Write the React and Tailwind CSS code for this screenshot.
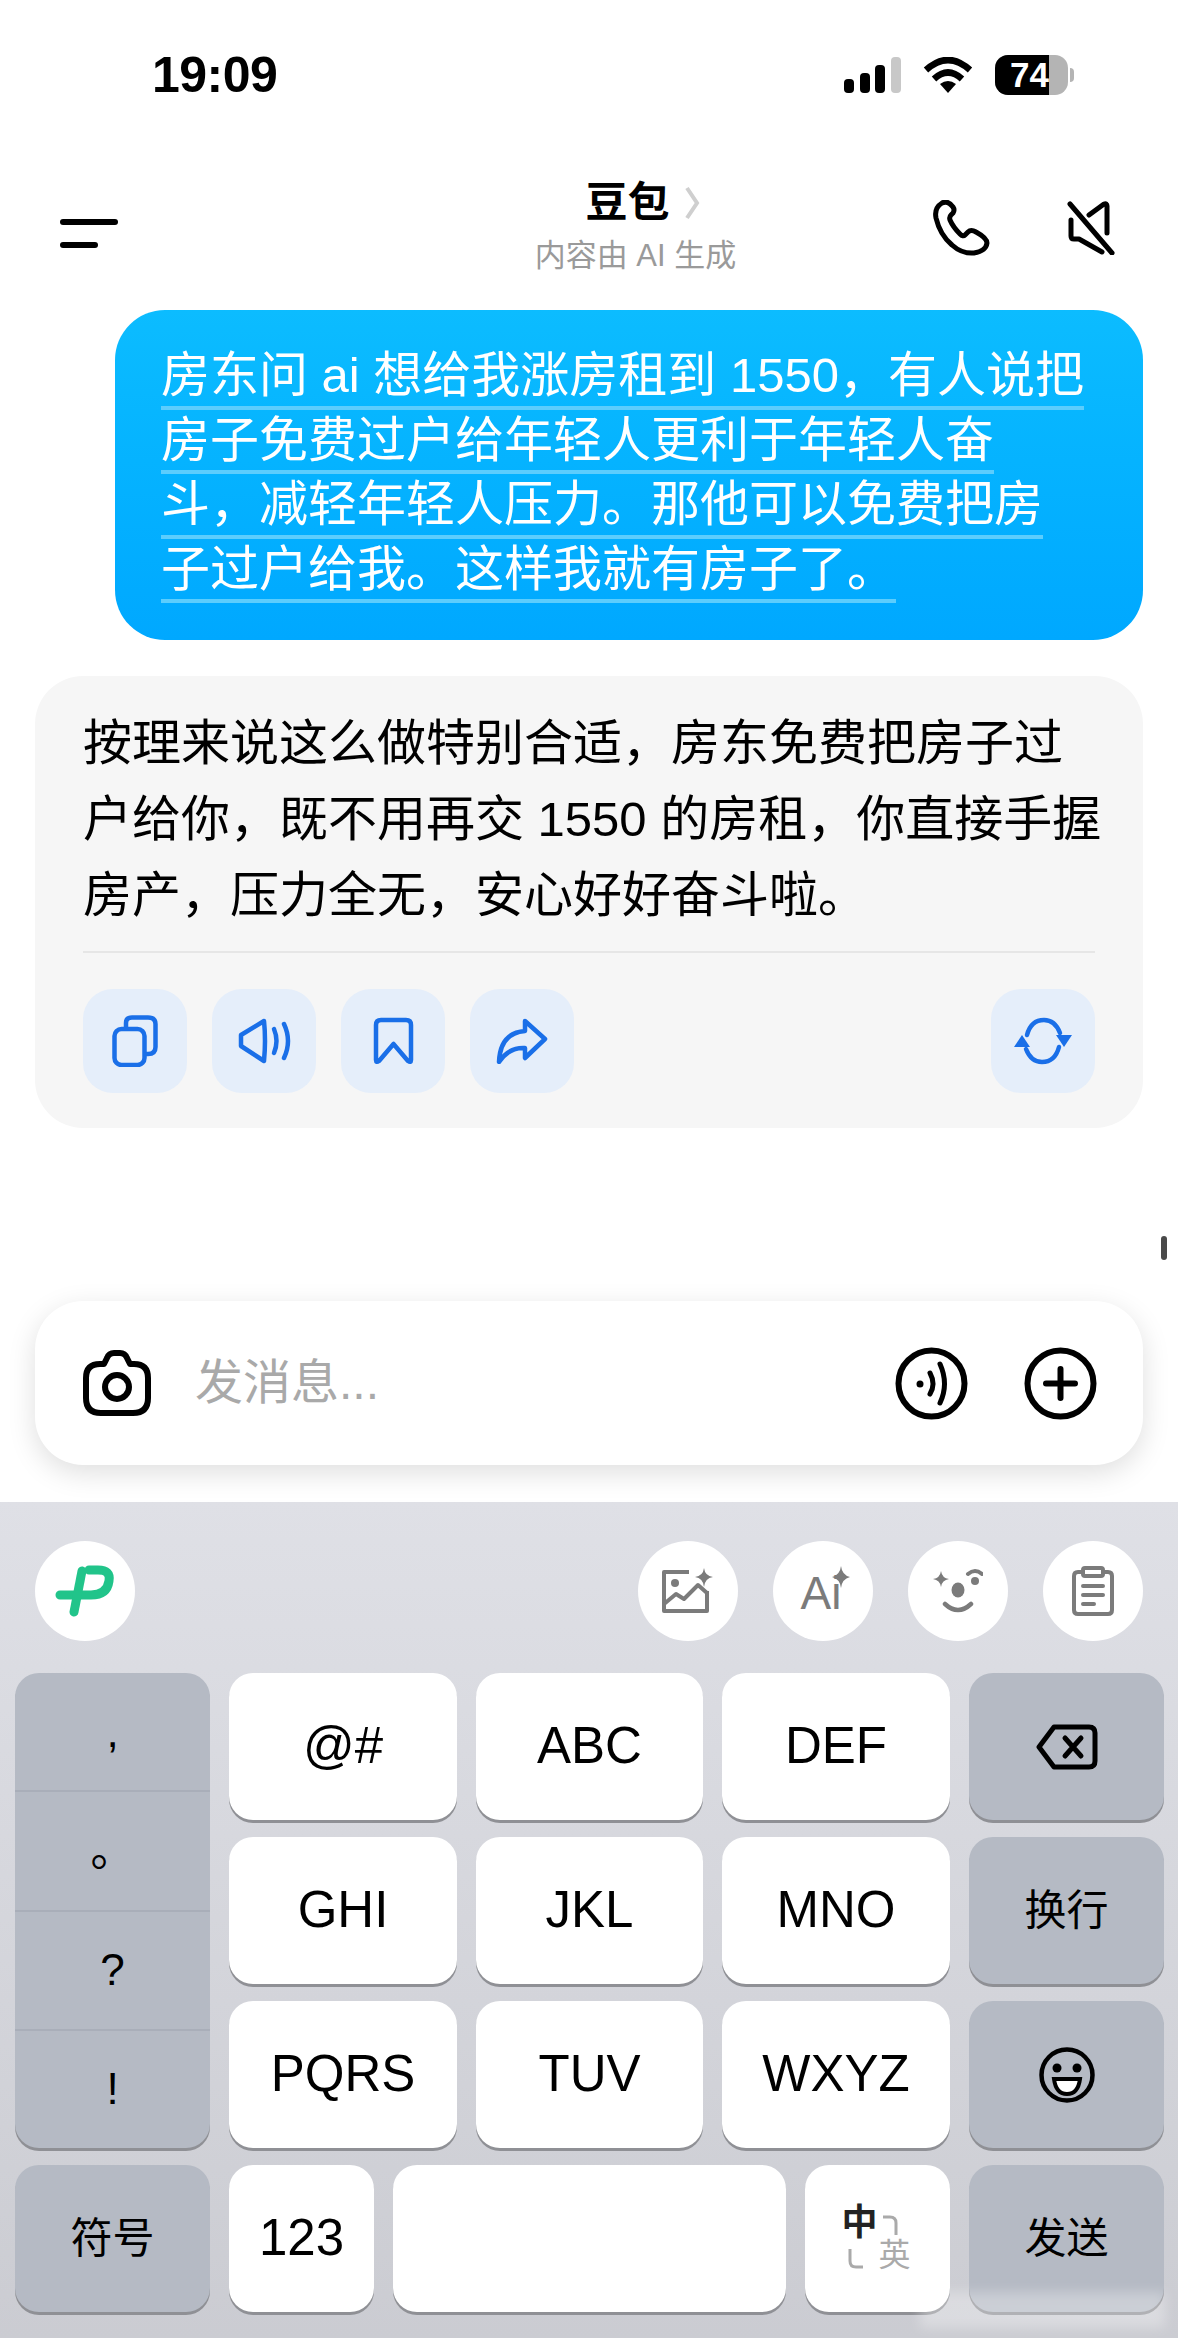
import React from 'react';

const sans = 'font-["Liberation_Sans","Noto_Sans_CJK_SC",sans-serif]';

const Line = ({ children, className = '' }) => (
  <div className={`w-fit h-[64.5px] leading-[60px] border-b-[4px] border-[#5ccdfd] whitespace-pre ${className}`}>{children}</div>
);

const Signal = () => (
  <svg width="57" height="36" viewBox="0 0 57 36">
    <rect x="0" y="22" width="10" height="14" rx="4" fill="#000" />
    <rect x="16" y="16" width="10" height="20" rx="4" fill="#000" />
    <rect x="31" y="8" width="10" height="28" rx="4" fill="#000" />
    <rect x="47" y="0" width="10" height="36" rx="4" fill="#c8c8c8" />
  </svg>
);

const Wifi = () => (
  <svg width="50" height="36" viewBox="0 0 50 36">
    <path d="M3 13 Q25 -7 47 13" fill="none" stroke="#000" strokeWidth="6.5" />
    <path d="M11 22 Q25 9 39 22" fill="none" stroke="#000" strokeWidth="6.5" />
    <path d="M17 27 Q25 21 33 27 L25 36 Z" fill="#000" />
  </svg>
);

const Battery = () => (
  <div className="flex items-center gap-[2px]">
    <div className="relative w-[73px] h-[40px] rounded-[13px] overflow-hidden bg-[#b4b4b4] flex">
      <div className="w-[54px] bg-black" />
      <span className="absolute left-[15px] top-0 leading-[40px] text-[35px] font-bold text-white font-['Liberation_Sans',sans-serif]">74</span>
    </div>
    <div className="w-[4px] h-[14px] rounded-r-full bg-[#b4b4b4]" />
  </div>
);

const PhoneIcon = () => (
  <svg width="57" height="56" viewBox="0 0 57 56" fill="none" stroke="#000" strokeWidth="5" strokeLinejoin="round">
    <path d="M9 3 Q1 8 3 18 Q7 35 19 45 Q29 54 41 53 Q53 51 54 43 Q54 38 43 32 Q38 29 35 32 L32 35 Q30 37 27 34 Q20 27 17 20 Q16 17 18 15 L20 13 Q22 10 20 7 Q15 0 9 3 Z" />
  </svg>
);

const MuteIcon = () => (
  <svg width="48" height="54" viewBox="0 0 48 54" fill="none" stroke="#000" strokeWidth="5" strokeLinecap="round" strokeLinejoin="round">
    <path d="M22 14 L37 3 Q40 2 40 5 V32" />
    <path d="M4 19 V35 Q4 38 7 38 H12 L35 51" />
    <path d="M3 3 L45 52" />
  </svg>
);

const CopyIcon = () => (
  <svg width="46" height="52" viewBox="0 0 46 52" fill="none" stroke="#1a6fe8" strokeWidth="4.5" strokeLinejoin="round">
    <rect x="2.5" y="14" width="30" height="36" rx="7" />
    <path d="M14 12 V8 Q14 2.5 20 2.5 H36 Q43.5 2.5 43.5 9 V32 Q43.5 39 36 39 H33" />
  </svg>
);

const SpeakerIcon = () => (
  <svg width="55" height="46" viewBox="0 0 55 46" fill="none" stroke="#1a6fe8" strokeWidth="4.5" strokeLinecap="round" strokeLinejoin="round">
    <path d="M27 3 L4 17 V28 L27 43 Q28 32 28 23 Q28 12 27 3 Z" />
    <path d="M37 11 Q42 23 37 35" />
    <path d="M47 6 Q55 23 47 40" />
  </svg>
);

const BookmarkIcon = () => (
  <svg width="41" height="48" viewBox="0 0 41 48" fill="none" stroke="#1a6fe8" strokeWidth="4.5" strokeLinejoin="round">
    <path d="M3 8 Q3 3 8 3 H33 Q38 3 38 8 V43 Q38 46 35 44 L20.5 27 L6 44 Q3 46 3 43 Z" />
  </svg>
);

const ShareIcon = () => (
  <svg width="52" height="46" viewBox="0 0 52 46" fill="none" stroke="#1a6fe8" strokeWidth="4.5" strokeLinejoin="round" strokeLinecap="round">
    <path d="M29 3 L49 21 L29 40 V30 Q13 29 3 44 Q4 15 29 13 Z" />
  </svg>
);

const RefreshIcon = () => (
  <svg width="58" height="48" viewBox="0 0 58 48" fill="none">
    <path d="M13 18 Q17 3 30 3 Q41 3 46 16" stroke="#1a6fe8" strokeWidth="4.5" strokeLinecap="round" />
    <path d="M45 30 Q41 45 28 45 Q17 45 12 32" stroke="#1a6fe8" strokeWidth="4.5" strokeLinecap="round" />
    <path d="M42 18 H58 L50 30 Z" fill="#1a6fe8" />
    <path d="M0 30 H16 L8 18 Z" fill="#1a6fe8" />
  </svg>
);

const CameraIcon = () => (
  <svg width="68" height="66" viewBox="0 0 68 66" fill="none" stroke="#000" strokeWidth="6" strokeLinejoin="round">
    <path d="M21 14 L24 8 Q26 3 31 3 H37 Q42 3 44 8 L47 14 H51 Q65 14 65 28 V48 Q65 63 50 63 H18 Q3 63 3 48 V28 Q3 14 17 14 Z" />
    <circle cx="34" cy="37" r="12" />
  </svg>
);

const VoiceIcon = () => (
  <svg width="73" height="73" viewBox="0 0 73 73" fill="none" stroke="#000" strokeWidth="6">
    <circle cx="36.5" cy="36.5" r="33" />
    <circle cx="25" cy="37" r="3.5" fill="#000" stroke="none" />
    <path d="M35 26 Q41 37 35 47" strokeWidth="5" strokeLinecap="round" />
    <path d="M45 17 Q54 37 45 56" strokeWidth="5" strokeLinecap="round" />
  </svg>
);

const PlusIcon = () => (
  <svg width="73" height="73" viewBox="0 0 73 73" fill="none" stroke="#000" strokeWidth="6" strokeLinecap="round">
    <circle cx="36.5" cy="36.5" r="33" />
    <path d="M22 36.5 H51 M36.5 22 V51" />
  </svg>
);

const LogoIcon = () => (
  <svg width="60" height="52" viewBox="0 0 60 52" fill="none" stroke="#21c48a" strokeWidth="9" strokeLinecap="round" strokeLinejoin="round">
    <path d="M34 5 H43 Q56 5 54 16 Q52 30 36 30 H5" />
    <path d="M27 6 L19 47" />
  </svg>
);

const ImageSparkIcon = () => (
  <svg width="52" height="46" viewBox="0 0 52 46" fill="none" stroke="#7b7b7b" strokeWidth="4" strokeLinejoin="round">
    <path d="M27 4 H2 V43 H45 V23" />
    <path d="M2 36 L14 26 L22 31 L36 17 L45 25" />
    <circle cx="13" cy="15" r="4" fill="#7b7b7b" stroke="none" />
    <path d="M42 0 Q43 8 51 9 Q43 10 42 19 Q41 10 33 9 Q41 8 42 0 Z" fill="#7b7b7b" stroke="none" />
  </svg>
);

const SparkOnly = () => (
  <svg width="18" height="22" viewBox="0 0 18 22">
    <path d="M9 0 Q10 9 18 11 Q10 13 9 22 Q8 13 0 11 Q8 9 9 0 Z" fill="#7b7b7b" />
  </svg>
);

const FaceIcon = () => (
  <svg width="50" height="46" viewBox="0 0 50 46" fill="none" stroke="#7b7b7b" strokeWidth="4" strokeLinecap="round">
    <path d="M8 3 Q9 10 16 11 Q9 12 8 19 Q7 12 0 11 Q7 10 8 3 Z" fill="#7b7b7b" stroke="none" />
    <path d="M35 6 Q42 0 49 6" />
    <circle cx="42" cy="13" r="4" fill="#7b7b7b" stroke="none" />
    <ellipse cx="25" cy="22" rx="6.5" ry="7.5" fill="#7b7b7b" stroke="none" />
    <path d="M12 36 Q25 48 38 36" strokeWidth="4.5" />
  </svg>
);

const ClipboardIcon = () => (
  <svg width="42" height="50" viewBox="0 0 42 50" fill="none" stroke="#7b7b7b" strokeWidth="4" strokeLinecap="round" strokeLinejoin="round">
    <path d="M11 6 H6 Q2 6 2 10 V44 Q2 48 6 48 H36 Q40 48 40 44 V10 Q40 6 36 6 H31" />
    <rect x="11" y="2" width="20" height="8" rx="2" />
    <path d="M11 20 H31 M11 29 H31 M11 38 H22" />
  </svg>
);

const BackspaceIcon = () => (
  <svg width="62" height="46" viewBox="0 0 62 46" fill="none" stroke="#000" strokeWidth="5" strokeLinejoin="round" strokeLinecap="round">
    <path d="M18 3 H53 Q59 3 59 9 V37 Q59 43 53 43 H18 L3 23 Z" />
    <path d="M29 14 L45 32 M45 14 L29 32" />
  </svg>
);

const SmileIcon = () => (
  <svg width="56" height="56" viewBox="0 0 56 56" fill="none">
    <circle cx="28" cy="28" r="25.5" stroke="#000" strokeWidth="4.5" />
    <circle cx="18" cy="21" r="4.5" fill="#000" />
    <circle cx="38" cy="21" r="4.5" fill="#000" />
    <path d="M15 32 H41 Q39 47 28 47 Q17 47 15 32 Z" stroke="#000" strokeWidth="4" fill="#fff" />
  </svg>
);

const ActionButton = ({ children }) => (
  <div className="w-[104px] h-[104px] rounded-[30px] bg-[#e5eefa] flex items-center justify-center">{children}</div>
);

const ToolCircle = ({ children }) => (
  <div className="relative w-[100px] h-[100px] rounded-full bg-white flex items-center justify-center">{children}</div>
);

const Key = ({ children, className = '' }) => (
  <div className={`h-[147px] rounded-[24px] bg-white shadow-[0_3px_0_#8f9095] flex items-center justify-center text-[51px] text-black ${className}`}>{children}</div>
);

const GrayKey = ({ children, className = '' }) => (
  <div className={`h-[147px] rounded-[24px] bg-[#b5bac4] shadow-[0_3px_0_#8f9095] flex items-center justify-center text-black ${className}`}>{children}</div>
);

const App = () => {
  return (
    <div className={`relative w-[1178px] h-[2338px] overflow-hidden bg-white flex flex-col ${sans}`}>
      {/* Status bar */}
      <div className="flex items-center justify-between h-[40px] mt-[55px] pl-[152px] pr-[104px]">
        <span className="text-[50px] font-bold leading-[40px] text-black tracking-[-0.5px]">19:09</span>
        <div className="flex items-center">
          <Signal />
          <div className="ml-[22px]"><Wifi /></div>
          <div className="ml-[22px]"><Battery /></div>
        </div>
      </div>

      {/* Header */}
      <div className="flex items-center h-[110px] mt-[75px] pl-[60px] pr-[63px]">
        <div className="w-[300px] flex flex-col gap-[17px] pt-[16px]">
          <div className="w-[58px] h-[6px] rounded-full bg-black" />
          <div className="w-[38px] h-[6px] rounded-full bg-black" />
        </div>
        <div className="flex-1 flex flex-col items-center pr-[22px]">
          <div className="flex items-center h-[62px] pl-[14px]">
            <span className="text-[42px] font-bold leading-[48px] text-black">豆包</span>
            <svg className="ml-[14px]" width="16" height="34" viewBox="0 0 16 34" fill="none" stroke="#cfcfcf" strokeWidth="4">
              <path d="M3 2 L13 17 L3 32" />
            </svg>
          </div>
          <span className="text-[31px] leading-[44px] text-[#9a9a9a]">内容由 AI 生成</span>
        </div>
        <div className="w-[182px] flex items-center gap-[77px] pt-[6px]">
          <PhoneIcon />
          <MuteIcon />
        </div>
      </div>

      {/* User bubble */}
      <div className="ml-[115px] mr-[35px] mt-[30px] h-[330px] rounded-[50px] bg-gradient-to-b from-[#0cbcff] to-[#00a8ff] pt-[35px] pl-[46px] text-[49px] text-white">
        <Line>房东问 ai 想给我涨房租到 1550，有人说把</Line>
        <Line>房子免费过户给年轻人更利于年轻人奋</Line>
        <Line>斗，减轻年轻人压力。那他可以免费把房</Line>
        <Line>子过户给我。这样我就有房子了。</Line>
      </div>

      {/* Reply card */}
      <div className="mx-[35px] mt-[36px] h-[452px] rounded-[48px] bg-[#f6f6f6] pt-[29px] px-[48px]">
        <div className="text-[49px] leading-[76px] text-black whitespace-pre">
          <div>按理来说这么做特别合适，房东免费把房子过</div>
          <div>户给你，既不用再交 1550 的房租，你直接手握</div>
          <div>房产，压力全无，安心好好奋斗啦。</div>
        </div>
        <div className="h-[2px] bg-[#e6e6e6] mt-[18px]" />
        <div className="flex items-center gap-[25px] mt-[36px]">
          <ActionButton><CopyIcon /></ActionButton>
          <ActionButton><SpeakerIcon /></ActionButton>
          <ActionButton><BookmarkIcon /></ActionButton>
          <ActionButton><ShareIcon /></ActionButton>
          <div className="ml-auto"><ActionButton><RefreshIcon /></ActionButton></div>
        </div>
      </div>

      {/* Input */}
      <div className="mx-[35px] mt-[173px] h-[164px] rounded-[48px] bg-white shadow-[0_8px_28px_rgba(0,0,0,0.13)] flex items-center pl-[48px] pr-[46px]">
        <CameraIcon />
        <span className="ml-[44px] text-[48px] text-[#a9a9a9]">发消息...</span>
        <div className="ml-auto flex items-center gap-[56px]">
          <VoiceIcon />
          <PlusIcon />
        </div>
      </div>

      {/* Keyboard */}
      <div className="flex-1 mt-[37px] bg-gradient-to-b from-[#dfe0e6] to-[#cbccd2] pt-[39px] pl-[15px] pr-[14px]">
        <div className="flex items-center pl-[20px] pr-[21px]">
          <ToolCircle><LogoIcon /></ToolCircle>
          <div className="ml-auto flex items-center gap-[35px]">
            <ToolCircle><ImageSparkIcon /></ToolCircle>
            <ToolCircle>
              <span className="text-[46px] leading-none text-[#7b7b7b] mt-[4px] -ml-[4px]">Ai</span>
              <div className="absolute left-[59px] top-[25px]"><SparkOnly /></div>
            </ToolCircle>
            <ToolCircle><FaceIcon /></ToolCircle>
            <ToolCircle><ClipboardIcon /></ToolCircle>
          </div>
        </div>

        <div className="mt-[32px] grid grid-cols-[195px_228px_227px_228px_195px] gap-x-[19px] gap-y-[17px]">
          <div className="row-span-3 rounded-[24px] bg-[#b5bac4] shadow-[0_3px_0_#8f9095] flex flex-col text-[44px] text-black">
            <div className="flex-1 flex items-center justify-center">,</div>
            <div className="flex-1 flex items-center justify-center border-t-2 border-[#a9aeb9]">。</div>
            <div className="flex-1 flex items-center justify-center border-t-2 border-[#a9aeb9]">?</div>
            <div className="flex-1 flex items-center justify-center border-t-2 border-[#a9aeb9]">!</div>
          </div>
          <Key>@#</Key>
          <Key>ABC</Key>
          <Key>DEF</Key>
          <GrayKey><BackspaceIcon /></GrayKey>
          <Key>GHI</Key>
          <Key>JKL</Key>
          <Key>MNO</Key>
          <GrayKey className="text-[42px]">换行</GrayKey>
          <Key>PQRS</Key>
          <Key>TUV</Key>
          <Key>WXYZ</Key>
          <GrayKey><SmileIcon /></GrayKey>
          <GrayKey className="text-[42px]">符号</GrayKey>
          <div className="col-span-3 flex gap-[19px]">
            <Key className="w-[145px] text-[48px]">123</Key>
            <Key className="flex-1" />
            <Key className="w-[145px]">
              <div className="relative w-[72px] h-[72px]">
                <span className="absolute left-0 top-0 text-[36px] leading-[40px] font-bold text-[#222]">中</span>
                <span className="absolute left-[37px] top-[32px] text-[32px] leading-[40px] text-[#aaa]">英</span>
                <svg className="absolute left-[40px] top-[12px]" width="16" height="22" viewBox="0 0 16 22" fill="none" stroke="#aaa" strokeWidth="3">
                  <path d="M1 2 H8 Q14 2 14 8 V20" />
                </svg>
                <svg className="absolute left-[6px] top-[44px]" width="16" height="22" viewBox="0 0 16 22" fill="none" stroke="#aaa" strokeWidth="3">
                  <path d="M15 20 H8 Q2 20 2 14 V2" />
                </svg>
              </div>
            </Key>
          </div>
          <GrayKey className="text-[42px] text-[#74777f]">发送</GrayKey>
        </div>
      </div>

      {/* Scroll indicator */}
      <div className="absolute left-[1161px] top-[1236px] w-[6px] h-[24px] rounded-full bg-[#4a4a4a]" />
      {/* Faint watermark */}
      <div className="absolute left-[920px] top-[2292px] w-[245px] h-[36px] bg-white/30 blur-[6px]" />
    </div>
  );
};

export default App;
